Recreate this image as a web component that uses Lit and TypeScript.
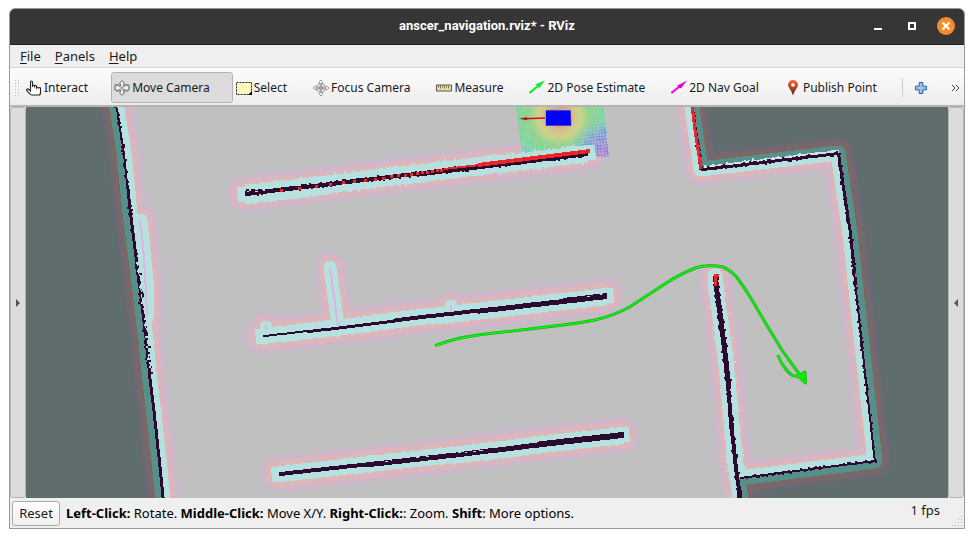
import { LitElement, html, svg, css } from "lit";
import { customElement, state } from "lit/decorators.js";

type Point = [number, number];

/** Small repeatable generator, so that the scan noise is the same on every draw. */
function noise(seed: number): () => number {
  let s = seed;
  return () => {
    s = (s * 16807) % 2147483647;
    return s / 2147483647;
  };
}

const line = (pts: Point[]) => "M" + pts.map((p) => p.join(" ")).join("L");

/** Occupied cells along a polyline: a ragged band built from short segments. */
function cells(pts: Point[], from: number, to: number, rough: number, seed: number, keep = 1) {
  const rnd = noise(seed);
  let total = 0;
  for (let i = 1; i < pts.length; i++) total += Math.hypot(pts[i][0] - pts[i - 1][0], pts[i][1] - pts[i - 1][1]);
  let d = "";
  let gone = 0;
  for (let i = 1; i < pts.length; i++) {
    const [ax, ay] = pts[i - 1];
    const [bx, by] = pts[i];
    const len = Math.hypot(bx - ax, by - ay);
    const flat = Math.abs(bx - ax) > Math.abs(by - ay);
    for (let t = 0; t < len; t += 2) {
      const w = Math.round(from + ((to - from) * (gone + t)) / total);
      const half = Math.floor(w / 2);
      const a = half + Math.round(rnd() < 0.4 ? rnd() * rough : 0);
      const b = w - half + Math.round(rnd() < 0.4 ? rnd() * rough : 0);
      const x = Math.round(ax + ((bx - ax) * t) / len);
      const y = Math.round(ay + ((by - ay) * t) / len);
      if (keep < 1 && rnd() > keep) continue;
      d += flat ? `M${x} ${y - a}h2v${a + b}h-2z` : `M${x - a} ${y}h${a + b}v2h-${a + b}z`;
    }
    gone += len;
  }
  return d;
}

const west: Point[] = [[115, 100], [117, 108], [124, 153], [130, 213], [137, 267], [141, 300], [146, 340], [149, 373], [155, 423], [163, 500]];
const east: Point[] = [[691, 100], [693, 115], [701, 169], [838, 153], [850, 233], [857, 299], [867, 390], [875, 461], [740, 478]];
const pillar: Point[] = [[715, 276], [717, 295], [721, 323], [727, 373], [732, 430], [737, 476], [741, 500]];
const shelfA: Point[] = [[245, 194], [363, 180], [463, 168], [588, 153]];
const shelfB: Point[] = [[263, 336], [333, 328], [430, 316], [606, 296]];
const shelfC: Point[] = [[279, 474], [450, 455], [550, 443], [622, 435]];
const ledge: Point[] = [[141, 220], [148, 290], [147, 318]];
const spur: Point[] = [[330, 267], [338, 326]];

const ROOM = line([...west, ...pillar.slice().reverse().slice(0, 2), ...east.slice().reverse()]) + "Z";
const WALLS = [west, east, pillar].map(line).join("");
const SHELVES = [shelfA, shelfB, shelfC].map(line).join("");
const EXTRAS = [ledge, spur].map(line).join("") + "M266 327v4M451 306v4";

const glow = (list: [number, string][]) =>
  list.map(
    ([w, colour]) => svg`
      <g stroke=${colour}>
        <path d=${WALLS} stroke-width=${w} />
        <path d=${SHELVES} stroke-width=${w + 3} />
        <path d=${EXTRAS} stroke-width=${w - 2} />
      </g>`
  );

const lightHalo: [number, string][] = [
  [35, "#c5bcc6"], [33, "#c9b9ca"], [30, "#ceb7ca"], [27, "#d3b7c5"], [24, "#d9b7bf"], [21, "#dcb6b9"],
];
const darkHalo: [number, string][] = [
  [35, "#636b71"], [33, "#676973"], [30, "#6c6874"], [27, "#726871"], [24, "#78676b"], [21, "#7a6866"],
];

const dots: Point[] = [
  [281, 190], [299, 188], [316, 186], [330, 184], [343, 182], [354, 181], [365, 180], [375, 179], [383, 178], [391, 176],
  [398, 175], [405, 175], [411, 174], [417, 173], [422, 172], [427, 172], [432, 171], [437, 170], [441, 170],
];

const icons: Record<string, unknown> = {
  hand: svg`<path d="M4.500 9.500V2.200q0-1.200 1-1.200t1 1.200V7V5.500q1-1 2 0V7.500V6q1-1 2 0V8q1-1.500 2 0q2-1 2 .5V13q0 2-2 2H6q-1.500 0-2.500-1.500L.7 10.500q-.4-2 1.600-1.500l2.200 2z" fill="#fff" stroke="#222" stroke-width="1.100" />`,
  move: svg`<g fill="#eee" stroke="#777"><path d="M8 .5l3 3.500H9.500v2l3-.5V4l3 4-3 4v-1.500l-3-.5v2H11l-3 3.500L5 12h1.500v-2l-3 .5V12L.5 8l3-4v1.500l3 .5V4H5z" /><path d="M1 4.500q4 0 7 3.500q3-3.500 7-3.500v6q-4 0-7-2q-3 2-7 2z" fill="none" stroke="#888" /></g>`,
  select: svg`<path d="M.5 2.500h15v12H.5z" fill="#fff6bd" stroke="#222" stroke-dasharray="2 1" /><path d="M12 15h4v-4z" fill="#000" />`,
  focus: svg`<g fill="none" stroke="#999"><circle cx="8" cy="8" r="4.500" fill="#e4e4e4" stroke-width="1.200" /><circle cx="8" cy="8" r="2" /><path d="M8 3v10M3 8h10" stroke="#888" /><path d="M6.500 3.500v-2L8 0l1.500 1.500v2M6.500 12.500v2L8 16l1.500-1.500v-2M3.500 6.500h-2L0 8l1.500 1.500h2M12.500 6.500h2L16 8l-1.500 1.500h-2" /></g>`,
  ruler: svg`<path d="M.5 5h15v6H.5z" fill="#eae0a5" stroke="#555" /><path d="M2.500 5.500v2M4.500 5.500v3M6.500 5.500v2M8.500 5.500v3M10.500 5.500v2M12.500 5.500v3" stroke="#776f45" />`,
  pose: svg`<path d="M.500 13L9 6" stroke="#0dea2d" stroke-width="2.200" /><path d="M6 4.500L16 .5L10 8.500L9 6z" fill="#0dea2d" />`,
  goal: svg`<path d="M.500 13L9 6" stroke="#f50ad2" stroke-width="2.200" /><path d="M6 5.500L16 .5L10 8.500z" fill="#f50ad2" /><path d="M8 6l3-1-2 3z" fill="#a0088e" />`,
  pin: svg`<defs><linearGradient id="pin" x2="0" y2="1"><stop offset="0" stop-color="#ee6a45" /><stop offset=".5" stop-color="#b8431f" /><stop offset="1" stop-color="#42200f" /></linearGradient></defs><path d="M8 15.500Q7 12 4.500 8.500Q3 6 3 5a5 5 0 0 1 10 0q0 1-1.500 3.500Q9 12 8 15.500z" fill="url(#pin)" /><circle cx="8" cy="5" r="1.800" fill="#fff" />`,
  plus: svg`<path d="M6.200 2.500h3.600v3.700h3.700v3.600H9.800v3.700H6.200V9.800H2.500V6.200h3.700z" fill="#9cc3ec" stroke="#2d5f9e" />`,
};

const tools: [string, string][] = [
  ["hand", "Interact"],
  ["move", "Move Camera"],
  ["select", "Select"],
  ["focus", "Focus Camera"],
  ["ruler", "Measure"],
  ["pose", "2D Pose Estimate"],
  ["goal", "2D Nav Goal"],
  ["pin", "Publish Point"],
];

@customElement("map-view")
class MapView extends LitElement {
  static styles = css`
    :host { display: block; background: #c0c0c0; overflow: hidden; }
    .scene { display: block; width: 100%; height: 100%; }
  `;

  render() {
    return html`
      <svg class="scene" viewBox="26 107 922 391" preserveAspectRatio="xMidYMid slice" role="img" aria-label="Occupancy map with planned path">
        <defs>
          <clipPath id="room"><path d=${ROOM} /></clipPath>
          <radialGradient id="cost" gradientUnits="userSpaceOnUse" cx="559" cy="116" r="54">
            <stop offset="0.150" stop-color="#e88f62" />
            <stop offset="0.280" stop-color="#e2c36a" />
            <stop offset="0.400" stop-color="#d6e060" />
            <stop offset="0.560" stop-color="#70e270" />
            <stop offset="0.780" stop-color="#58e68c" />
            <stop offset="1" stop-color="#50d4dc" />
          </radialGradient>
          <radialGradient id="far" gradientUnits="userSpaceOnUse" cx="611" cy="160" r="44">
            <stop offset="0" stop-color="#d05fe0" />
            <stop offset="0.300" stop-color="#9472e8" />
            <stop offset="0.650" stop-color="#6c8fe8" stop-opacity="0.900" />
            <stop offset="1" stop-color="#60d0e0" stop-opacity="0" />
          </radialGradient>
          <pattern id="mesh" width="3" height="3" patternUnits="userSpaceOnUse" patternTransform="rotate(-7)">
            <path d="M0 0h2v1H0zM0 2h1v1H0z" fill="#c0c0c0" />
          </pattern>
          <pattern id="bands" width="11" height="9" patternUnits="userSpaceOnUse" patternTransform="rotate(20)">
            <path d="M0 0h11v3H0zM0 0h3v9H0z" fill="#c0c0c0" opacity="0.300" />
          </pattern>
        </defs>

        <g shape-rendering="crispEdges">
          <path d="M26 107h922v391H26z" fill="#5f6e6d" />
          <g fill="none" stroke-linejoin="round" stroke-linecap="round">${glow(darkHalo)}
            <path d=${WALLS} stroke="#578f8a" stroke-width="15" />
          </g>
          <g clip-path="url(#room)">
            <path d="M26 107h922v391H26z" fill="#c0c0c0" />
            <g fill="none" stroke-linejoin="round" stroke-linecap="round">${glow(lightHalo)}
              <path d="M516 107H604L609 157L522 153z" fill="url(#cost)" />
              <path d="M516 107H604L609 157L522 153z" fill="url(#far)" />
              <path d="M516 107H604L609 157L522 153z" fill="url(#mesh)" />
              <path d="M516 107H604L609 157L522 153z" fill="url(#bands)" />
              <g stroke="#b7e1e0">
                <path d=${WALLS} stroke-width="15" />
                <path d=${SHELVES} stroke-width="15" stroke-linecap="square" />
                <path d=${EXTRAS} stroke-width="13" />
                <path d=${cells(west, 14, 14, 1, 31) + cells(pillar, 14, 16, 2, 17) + cells(shelfA, 19, 17, 2, 5) + cells(shelfB, 16, 17, 1, 8) + cells(shelfC, 16, 17, 1, 13)} fill="#b7e1e0" stroke="none" />
              </g>
              <path d=${line([[140, 222], [143, 245], [146, 290], [147, 316]])} stroke="#dfb5e0" stroke-width="2" />
              <path d=${line(spur) + "M266 325v5M451 305v6"} stroke="#dfb5e0" stroke-width="2" stroke-linecap="butt" />
            </g>
          </g>
          <path d=${cells([[704, 167], [838, 151]], 2, 2, 2, 41)} fill="#cfe3e2" />
          <g fill="#2c0a2e">
            <path d=${cells(west.slice(0, 5), 2, 3, 1, 3)} />
            <path d=${cells(west.slice(4, 8), 3, 3, 2, 71)} />
            <path d=${cells(west.slice(7), 3, 3, 0, 3)} />
            <path d=${cells(east, 3, 2, 1, 9)} />
            <path d=${cells(pillar, 5, 4, 1, 23)} />
            <path d=${cells(shelfA, 4, 5, 1, 7)} />
            <path d=${cells(shelfB, 2, 6, 0, 2)} />
            <path d=${cells(shelfC, 4, 6, 0, 11)} />
          </g>
          <path d=${cells([[137, 262], [142, 300], [147, 340], [149, 366]], 1, 1, 1, 5, 0.5)} fill="#b7e1e0" />
          <path d="M246 189h3v1h2v-1h4v1h3v-1h4v1h3v-1h5v1h4v-1h5v2H246z" fill="#2c0a2e" />
          <path d="M249 190h2v1h-2zM255 191h3v1h-3zM263 190h2v1h-2zM385 461h3v1h-3zM391 460h1v1h-1zM416 457h3v1h-3zM426 456h3v1h-3zM458 452h3v1h-3zM465 452h2v1h-2zM473 451h3v1h-3zM479 450h4v1h-4zM587 296h3v1h-3zM600 294h2v1h-2z" fill="#b7e1e0" />
          <g fill="none" stroke="#ee2528">
            <path d="M444 169L480 165" stroke-width="2" />
            <path d="M478 165L590 151" stroke-width="4" />
            <path d="M692 105L695 130L701 169" stroke-width="3" />
            <path d="M719 275H715V286" stroke-width="3" />
          </g>
          <g fill="#ee2528">${dots.map(([x, y]) => svg`<path d="M${x - 1} ${y - 1}h3v3h-3z" />`)}</g>
        </g>

        <path d="M546 110.500h24.500l.5 15H546z" fill="#00f" stroke="#2a2ab0" stroke-width="0.500" />
        <path d="M545 118L525 118.700" stroke="#c01010" stroke-width="1.500" />
        <path d="M519 118.700l8-1.700v3.300z" fill="#b31010" />

        <g fill="none" stroke-linejoin="round">
          ${[["#3c913c", 3], ["#00f400", 2]].map(
            ([colour, w]) => svg`
              <g stroke=${colour} stroke-width=${w}>
                <path d="M435 345.700Q448 341 460 338Q485 333.500 513 331L563 325Q580 323 595 320Q615 315 630 306.700L666.700 282.700Q680 274 696.700 267.500Q703 265.500 710 265.700Q717 265.500 723 267Q730 270 736.700 277Q744 287 752 300L766.700 325L783 351.700L805 382" />
                <path d="M777.700 355Q781 363 785 368Q789 373.500 792.500 375.500Q796 376.500 803 376" />
                <path d="M805 372L798.500 376.500L805.500 383z" />
              </g>`
          )}
        </g>
      </svg>
    `;
  }
}

@customElement("app-root")
class AppRoot extends LitElement {
  @state() private active = "Move Camera";

  static styles = css`
    :host {
      display: block;
      box-sizing: border-box;
      min-height: 100vh;
      padding: 8px 9px 9px;
      background: #fff;
      color: #1a1a1a;
      font: 13px/18px "Noto Sans", "Open Sans", sans-serif;
    }
    * { box-sizing: border-box; }
    button { font: inherit; color: inherit; margin: 0; padding: 0; border: 0; background: none; }
    .window {
      display: grid;
      grid-template-rows: 36px 23px 39px 1fr 30px;
      min-height: calc(100vh - 17px);
      border: 1px solid #999;
      border-radius: 6px 6px 0 0;
      background: #efefef;
      overflow: hidden;
    }
    .titlebar {
      display: grid;
      grid-template-columns: 1fr auto 1fr;
      align-items: center;
      padding-bottom: 1px;
      background: #363636;
      border-bottom: 1px solid #222;
      color: #fff;
    }
    .title { grid-column: 2; margin: 0; font: bold 13px/18px "Roboto", "Noto Sans", sans-serif; }
    .controls { display: flex; justify-content: flex-end; align-items: center; gap: 16px; padding-right: 9px; }
    .control { display: flex; width: 18px; height: 20px; align-items: center; justify-content: center; }
    .menubar { display: flex; align-items: center; gap: 14px; padding: 0 10px; border-bottom: 1px solid #d6d6d6; }
    .menubar u { text-underline-offset: 2px; }
    .toolbar {
      display: flex;
      align-items: center;
      min-width: 0;
      padding: 2px 4px 0;
      border-bottom: 2px solid #b4b4b4;
      background: linear-gradient(#fcfcfc, #ededed);
    }
    .grip { width: 6px; height: 17px; margin-right: 3px; background: radial-gradient(circle, #bbb 1px, transparent 1px) 0 0 / 3px 3px; }
    .tool {
      display: flex;
      align-items: center;
      flex: none;
      gap: 2px;
      height: 31px;
      padding: 0 22px 0 2px;
      border: 1px solid transparent;
      border-radius: 3px;
      font-size: 12px;
      white-space: nowrap;
    }
    .tool.active { background: #dcdcdc; border-color: #b3b3b3; }
    .icon { display: block; width: 16px; height: 16px; fill: none; }
    .separator { width: 1px; height: 19px; margin: 0 10px 0 auto; background: #ccc; }
    .add { flex: none; }
    .more { display: flex; margin-left: 22px; }
    .chevrons { fill: none; stroke: #444; }
    .body { display: grid; grid-template-columns: 16px 1fr 16px; min-height: 200px; }
    .view { min-height: 0; height: 100%; contain: size; }
    .strip {
      display: flex;
      align-items: center;
      justify-content: center;
      border: 1px solid #b5b5b5;
      border-radius: 3px;
      background: #dcdcdc;
    }
    .status { display: flex; align-items: center; gap: 6px; padding: 0 2px; position: relative; }
    .reset {
      width: 48px;
      height: 25px;
      border: 1px solid #aaa;
      border-radius: 3px;
      background: linear-gradient(#fefefe, #f0f0f0);
    }
    .hint { margin: 0; flex: 1; color: #000; }
    .fps { padding: 0 22px 6px 0; }
    .resize { position: absolute; right: 1px; bottom: 1px; width: 12px; height: 12px; fill: #b8b8b8; }
  `;

  render() {
    return html`
      <main class="window">
        <header class="titlebar">
          <h1 class="title">anscer_navigation.rviz* - RViz</h1>
          <div class="controls">
            <button class="control" aria-label="Minimize">
              <svg width="18" height="18"><path d="M5 11h8v2H5z" fill="#fff" /></svg>
            </button>
            <button class="control" aria-label="Maximize">
              <svg width="18" height="18"><path d="M6 6h6v6H6z" fill="none" stroke="#fff" stroke-width="2" /></svg>
            </button>
            <button class="control" aria-label="Close">
              <svg width="18" height="18"><circle cx="9" cy="9" r="9" fill="#f58b2b" /><path d="M5.500 5.500l7 7M12.500 5.500l-7 7" stroke="#fff" stroke-width="2.200" /></svg>
            </button>
          </div>
        </header>
        <nav class="menubar">
          <button><u>F</u>ile</button>
          <button><u>P</u>anels</button>
          <button><u>H</u>elp</button>
        </nav>
        <div class="toolbar" role="toolbar" aria-label="Tools">
          <span class="grip"></span>
          ${tools.map(
            ([icon, label]) => html`
              <button
                class="tool ${this.active === label ? "active" : ""}"
                aria-pressed=${this.active === label}
                @click=${() => (this.active = label)}
              >
                <svg class="icon" viewBox="0 0 16 16">${icons[icon]}</svg>${label}
              </button>`
          )}
          <span class="separator"></span>
          <button class="add" aria-label="Add tool"><svg class="icon" viewBox="0 0 16 16">${icons.plus}</svg></button>
          <button class="more" aria-label="More tools"><svg class="chevrons" width="9" height="8"><path d="M1 1l3 3-3 3M5 1l3 3-3 3" /></svg></button>
        </div>
        <section class="body">
          <button class="strip" aria-label="Show left panel">
            <svg width="4" height="8"><path d="M0 0l4 4-4 4z" fill="#555" /></svg>
          </button>
          <map-view class="view"></map-view>
          <button class="strip" aria-label="Show right panel">
            <svg width="4" height="8"><path d="M4 0L0 4l4 4z" fill="#555" /></svg>
          </button>
        </section>
        <footer class="status">
          <button class="reset">Reset</button>
          <p class="hint"><b>Left-Click:</b> Rotate. <b>Middle-Click:</b> Move X/Y. <b>Right-Click:</b>: Zoom. <b>Shift</b>: More options.</p>
          <span class="fps">1 fps</span>
          <svg class="resize" viewBox="0 0 12 12"><path d="M10 1h1v1h-1zM7 4h1v1H7zM10 4h1v1h-1zM4 7h1v1H4zM7 7h1v1H7zM10 7h1v1h-1zM1 10h1v1H1zM4 10h1v1H4zM7 10h1v1H7zM10 10h1v1h-1z" /></svg>
        </footer>
      </main>
    `;
  }
}
